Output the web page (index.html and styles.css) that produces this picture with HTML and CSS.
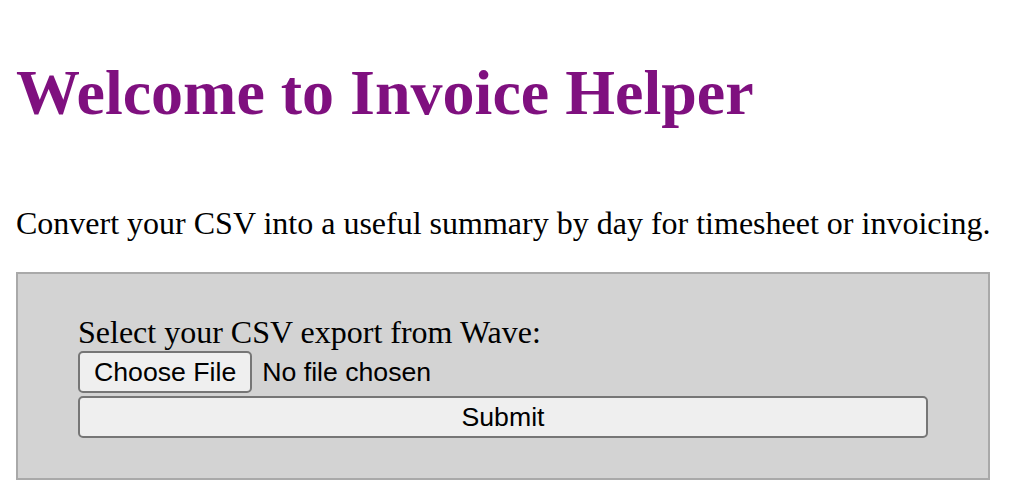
FILE: index.html
```html
<!DOCTYPE html>
<html>
<head>
<meta charset="utf-8">
<link rel="stylesheet" href="styles.css">
</head>
<body>
<h1 class="title">Welcome to Invoice Helper</h1>
<p class="intro">Convert your CSV into a useful summary by day for timesheet or invoicing.</p>
<div class="panel">
  <form class="upload">
    <label class="upload-label" for="csv">Select your CSV export from Wave:</label>
    <div class="file-row">
      <button type="button" class="btn file-btn">Choose File</button>
      <span class="file-status">No file chosen</span>
    </div>
    <button type="button" class="btn submit-btn">Submit</button>
  </form>
</div>
</body>
</html>
```
FILE: styles.css
```css
html, body {
  margin: 0;
  padding: 0;
  background: #ffffff;
}
body {
  padding: 0 16px;
  font-family: "Liberation Serif", "Times New Roman", serif;
  color: #000000;
}
.title {
  margin: 56px 0 0 0;
  font-size: 64px;
  font-weight: bold;
  color: #7f107f;
  line-height: normal;
}
.intro {
  margin: 75px 0 0 0;
  font-size: 32px;
  line-height: normal;
}
.panel {
  box-sizing: border-box;
  max-width: 974px;
  margin-top: 30px;
  background: #d3d3d3;
  border: 2px solid #a9a9a9;
  padding: 40px 60px 40px 60px;
}
.upload {
  display: flex;
  flex-direction: column;
  margin: 0;
}
.upload-label {
  font-size: 32px;
  line-height: normal;
}
.file-row {
  display: flex;
  align-items: center;
  gap: 10px;
}
.btn {
  font-family: "Liberation Sans", Arial, sans-serif;
  font-size: 26.67px;
  color: #000000;
  background: #efefef;
  border: 2px solid #767676;
  border-radius: 5px;
  padding: 2px 14px;
  height: 42px;
  margin: 0;
}
.file-status {
  font-family: "Liberation Sans", Arial, sans-serif;
  font-size: 26.67px;
}
.submit-btn {
  width: 100%;
  margin-top: 3px;
}
```
